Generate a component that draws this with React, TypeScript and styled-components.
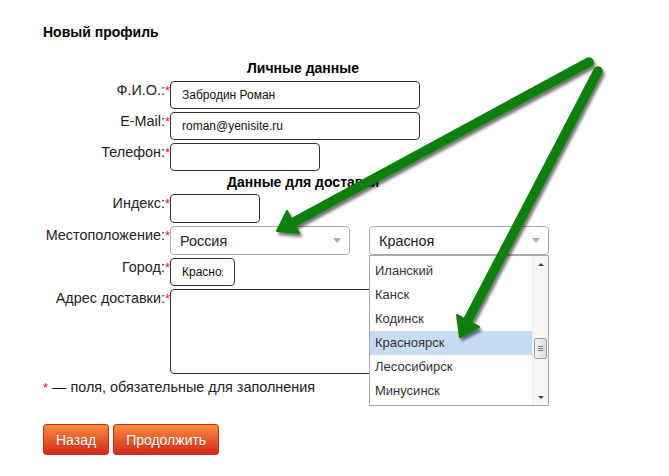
import styled, { createGlobalStyle } from "styled-components";

const GlobalStyle = createGlobalStyle`
  body {
    margin: 0;
    background: #fff;
    font-family: "Liberation Sans", Arial, sans-serif;
    color: #222;
  }
`;

const Page = styled.div`
  position: relative;
  width: 669px;
  height: 476px;
  box-sizing: border-box;
  padding: 24px 0 0 43px;
  overflow: hidden;
`;

const Title = styled.h1`
  margin: 0;
  font-size: 14px;
  line-height: 17px;
  font-weight: 700;
  color: #000;
`;

const Form = styled.div`
  margin-top: 19px;
  width: 520px;
  display: grid;
  grid-template-columns: 127px 1fr;
  row-gap: 3px;
  align-items: start;
`;

const Section = styled.div<{ $after?: number }>`
  grid-column: 1 / -1;
  text-align: center;
  font-size: 14px;
  line-height: 17px;
  font-weight: 700;
  color: #000;
  margin-bottom: ${({ $after }) => $after || 0}px;
`;

const Label = styled.label`
  text-align: right;
  font-size: 14.4px;
  line-height: 17px;
  padding-top: 1px;
  color: #222;
  white-space: nowrap;
`;

const Req = styled.span`
  color: #e31d1d;
  font-size: 13px;
`;

const TextInput = styled.input<{ $w: number; $h?: number }>`
  box-sizing: border-box;
  display: block;
  width: ${({ $w }) => $w}px;
  height: ${({ $h }) => $h || 28}px;
  margin: 0;
  border: 1px solid #333;
  border-radius: 4px;
  padding: 0 11px;
  font: 12px "Liberation Sans", Arial, sans-serif;
  color: #111;
  background: #fff;
  outline: none;
`;

const TextArea = styled.textarea`
  box-sizing: border-box;
  display: block;
  width: 210px;
  height: 85px;
  margin: 0;
  border: 1px solid #333;
  border-radius: 4px;
  font: 12px "Liberation Sans", Arial, sans-serif;
  outline: none;
`;

const SelectRow = styled.div`
  display: flex;
  gap: 19px;
`;

const SelectWrap = styled.div`
  position: relative;
`;

const SelectBox = styled.div`
  box-sizing: border-box;
  width: 180px;
  height: 29px;
  display: flex;
  align-items: center;
  justify-content: space-between;
  padding: 0 8px 0 9px;
  border: 1px solid #aaa;
  border-radius: 4px;
  background: #fff;
  font-size: 14.4px;
  color: #222;
`;

const Caret = styled.span`
  width: 0;
  height: 0;
  border-left: 4px solid transparent;
  border-right: 4px solid transparent;
  border-top: 5px solid #b0b0b0;
`;

const DropList = styled.div`
  position: absolute;
  top: 100%;
  left: 0;
  z-index: 2;
  box-sizing: border-box;
  width: 180px;
  height: 151px;
  display: flex;
  border: 1px solid #aaa;
  background: #fff;
`;

const Options = styled.ul`
  flex: 1;
  margin: 0;
  padding: 3px 0 0;
  list-style: none;
`;

const Option = styled.li<{ $active?: boolean }>`
  height: 24px;
  line-height: 24px;
  padding-left: 5px;
  font-size: 13px;
  color: #333;
  background: ${({ $active }) => ($active ? "#c6dcf2" : "transparent")};
`;

const Scrollbar = styled.div`
  width: 15px;
  display: flex;
  flex-direction: column;
  align-items: center;
  border-left: 1px solid #ededed;
  background: #f7f7f7;
`;

const ScrollBtn = styled.div<{ $down?: boolean }>`
  height: 16px;
  display: flex;
  align-items: center;
  justify-content: center;
  &::after {
    content: "";
    border-left: 3px solid transparent;
    border-right: 3px solid transparent;
    ${({ $down }) =>
      $down ? "border-top: 3px solid #444;" : "border-bottom: 3px solid #444;"}
  }
`;

const Track = styled.div`
  flex: 1;
  width: 100%;
`;

const Thumb = styled.div`
  box-sizing: border-box;
  width: 13px;
  height: 21px;
  margin: 66px auto 0;
  border: 1px solid #9a9a9a;
  border-radius: 2px;
  background: linear-gradient(90deg, #f4f4f4, #dcdcdc);
  display: flex;
  flex-direction: column;
  justify-content: center;
  align-items: center;
  gap: 1px;
`;

const Grip = styled.span`
  width: 5px;
  height: 1px;
  background: #777;
`;

const Note = styled.p`
  margin: 5px 0 0;
  font-size: 14.4px;
  line-height: 17px;
  color: #222;
`;

const Buttons = styled.div`
  display: flex;
  gap: 4px;
  margin-top: 28px;
`;

const Button = styled.button`
  height: 31px;
  padding: 0 12px;
  border: 1px solid #c8311f;
  border-radius: 3px;
  background: linear-gradient(#f88f3b, #d3281e);
  color: #fff;
  font: 14px "Liberation Sans", Arial, sans-serif;
  text-shadow: 0 1px 1px rgba(0, 0, 0, 0.2);
  cursor: pointer;
`;

const Overlay = styled.svg`
  position: absolute;
  top: 0;
  left: 0;
  z-index: 5;
  pointer-events: none;
`;

const cities = ["Иланский", "Канск", "Кодинск", "Красноярск", "Лесосибирск", "Минусинск"];

const Arrow = ({ x1, y1, bx, by, head }: { x1: number; y1: number; bx: number; by: number; head: string }) => (
  <g filter="url(#shadow)" fill="#0c7f0c" stroke="#0c7f0c">
    <line x1={x1} y1={y1} x2={bx} y2={by} strokeWidth={9.5} strokeLinecap="round" />
    <polygon points={head} strokeWidth={2} strokeLinejoin="round" />
  </g>
);

const App = () => {
  return (
    <Page>
      <GlobalStyle />
      <Title>Новый профиль</Title>
      <Form>
        <Section $after={1}>Личные данные</Section>
        <Label>
          Ф.И.О.:<Req>*</Req>
        </Label>
        <TextInput $w={250} defaultValue="Забродин Роман" />
        <Label>
          E-Mail:<Req>*</Req>
        </Label>
        <TextInput $w={250} defaultValue="roman@yenisite.ru" />
        <Label>
          Телефон:<Req>*</Req>
        </Label>
        <TextInput $w={150} />

        <Section>Данные для доставки</Section>
        <Label>
          Индекс:<Req>*</Req>
        </Label>
        <TextInput $w={90} $h={29} />
        <Label>
          Местоположение:<Req>*</Req>
        </Label>
        <SelectRow>
          <SelectBox>
            Россия
            <Caret />
          </SelectBox>
          <SelectWrap>
            <SelectBox>
              Красноя
              <Caret />
            </SelectBox>
            <DropList>
              <Options>
                {cities.map((c) => (
                  <Option key={c} $active={c === "Красноярск"}>
                    {c}
                  </Option>
                ))}
              </Options>
              <Scrollbar>
                <ScrollBtn />
                <Track>
                  <Thumb>
                    <Grip />
                    <Grip />
                    <Grip />
                  </Thumb>
                </Track>
                <ScrollBtn $down />
              </Scrollbar>
            </DropList>
          </SelectWrap>
        </SelectRow>
        <Label>
          Город:<Req>*</Req>
        </Label>
        <TextInput $w={65} defaultValue="Красноярск" />
        <Label>
          Адрес доставки:<Req>*</Req>
        </Label>
        <TextArea />
      </Form>
      <Note>
        <Req>*</Req> — поля, обязательные для заполнения
      </Note>
      <Buttons>
        <Button>Назад</Button>
        <Button>Продолжить</Button>
      </Buttons>

      <Overlay width="669" height="476" viewBox="0 0 669 476">
        <defs>
          <filter id="shadow" x="-10%" y="-10%" width="130%" height="130%">
            <feDropShadow dx="2" dy="3" stdDeviation="1.6" floodColor="#000" floodOpacity="0.55" />
          </filter>
        </defs>
        <Arrow x1={589} y1={62} bx={294} by={222} head="277,231 287,211 299,233" />
        <Arrow x1={598} y1={71} bx={468} by={320} head="460,337 457,315 479,327" />
      </Overlay>
    </Page>
  );
};

export default App;
